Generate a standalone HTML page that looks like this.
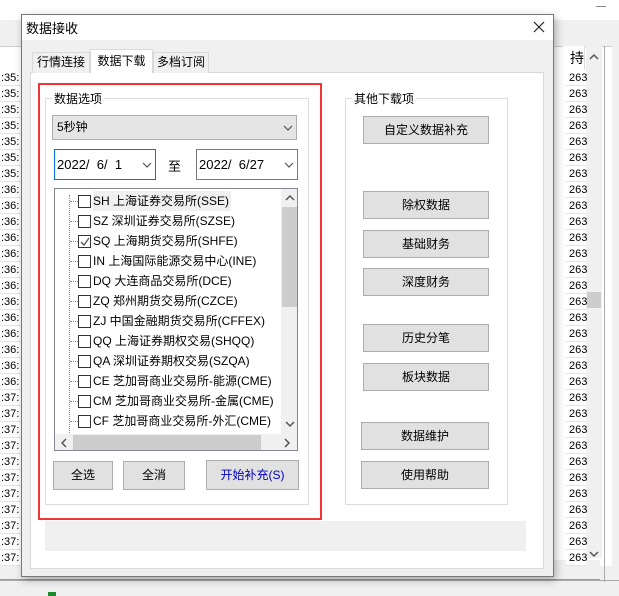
<!DOCTYPE html><html><head><meta charset="utf-8"><style>
*{margin:0;padding:0;box-sizing:border-box}
body{width:619px;height:596px;position:relative;overflow:hidden;background:#f0f0f0;font-family:"Liberation Sans","Noto Sans CJK SC",sans-serif;font-size:12px;color:#000}
.a{position:absolute}
.btn{position:absolute;background:#e1e1e1;border:1px solid #adadad;text-align:center;font-size:12px}
.row{position:absolute;height:16px;line-height:16px;font-size:11px;border-bottom:1px solid #e4e4e4;background:#fff}
.it{position:absolute;left:0;height:20px;line-height:20px;font-size:12px;white-space:nowrap}
.cb{position:absolute;width:13px;height:13px;border:1px solid #333;background:#fff;top:4px}
.dot{position:absolute;border-top:1px dotted #888;width:12px;top:10px}
</style></head><body>
<div class="a" style="left:0;top:0;width:619px;height:20px;background:#fff"></div>
<div class="a" style="top:6px;width:10px;border-top:1px solid #888;left:596px"></div>
<div class="a" style="left:0;top:46px;width:612px;height:520px;background:#fff;border-top:1px solid #ccc"></div>
<div class="a" style="left:563px;top:46px;width:22px;height:24px;background:#fff;border-right:1px solid #ddd;font-size:14px;line-height:24px;padding-left:7px">持1</div>
<div class="a" style="left:586px;top:46px;width:16px;height:512px;background:#f0f0f0"></div>
<div class="a" style="left:587px;top:292px;width:14px;height:16px;background:#cdcdcd"></div>
<svg class="a" style="left:589px;top:53px" width="10" height="8"><path d="M1 6 L5 2 L9 6" fill="none" stroke="#555" stroke-width="1.5"/></svg>
<svg class="a" style="left:589px;top:550px" width="10" height="8"><path d="M1 2 L5 6 L9 2" fill="none" stroke="#555" stroke-width="1.5"/></svg>
<div class="a" style="left:0;top:560px;width:600px;height:20px;background:#f0f0f0;border-bottom:1px solid #999"></div>
<div class="a" style="left:0;top:580px;width:619px;height:16px;background:#f0f0f0;border-top:1px solid #aaa"></div>
<div class="a" style="left:48px;top:592px;width:8px;height:4px;background:#1a8a2a"></div>
<div class="a" style="left:604px;top:46px;width:1px;height:536px;background:#aaa"></div>
<script>
var s='';for(var i=0;i<31;i++){var y=70+i*16;var t=i<7?':35:':(i<20?':36:':':37:');s+='<div class="row" style="left:0;top:'+y+'px;width:22px;padding-left:1px">'+t+'</div>';s+='<div class="row" style="left:566px;top:'+y+'px;width:20px;padding-left:3px">263</div>';}
document.write(s);
</script>
<!-- dialog -->
<div class="a" style="left:21px;top:14px;width:533px;height:563px;background:#f0f0f0;border:1px solid #777;box-shadow:2px 3px 8px rgba(0,0,0,.3)"></div>
<div class="a" style="left:22px;top:15px;width:531px;height:25px;background:#fff"></div>
<div class="a" style="left:26px;top:18px;font-size:13px">数据接收</div>
<svg class="a" style="left:533px;top:21px" width="12" height="12"><path d="M1 1 L11 11 M11 1 L1 11" stroke="#222" stroke-width="1.2"/></svg>
<div class="a" style="left:30px;top:72px;width:514px;height:497px;background:#fff;border:1px solid #d9d9d9"></div>
<div class="a" style="left:32px;top:52px;width:58px;height:21px;background:#f0f0f0;border:1px solid #d9d9d9;border-bottom:none;font-size:12px;line-height:19px;text-align:center">行情连接</div>
<div class="a" style="left:90px;top:49px;width:63px;height:24px;background:#fff;border:1px solid #d9d9d9;border-bottom:none;font-size:12px;line-height:22px;text-align:center">数据下载</div>
<div class="a" style="left:153px;top:52px;width:56px;height:21px;background:#f0f0f0;border:1px solid #d9d9d9;border-bottom:none;font-size:12px;line-height:19px;text-align:center">多档订阅</div>
<!-- red box -->
<div class="a" style="left:38px;top:83px;width:284px;height:437px;border:2px solid #f03535"></div>
<div class="a" style="left:45px;top:98px;width:264px;height:407px;border:1px solid #dcdcdc"></div>
<div class="a" style="left:52px;top:90px;background:#fff;padding:0 2px;font-size:12px">数据选项</div>
<div class="a" style="left:52px;top:115px;width:245px;height:25px;background:#e5e5e5;border:1px solid #adadad;line-height:23px;padding-left:4px">5秒钟</div>
<svg class="a" style="left:283px;top:125px" width="10" height="6"><path d="M1 1 L5 5 L9 1" fill="none" stroke="#555" stroke-width="1.2"/></svg>
<div class="a" style="left:54px;top:149px;width:102px;height:31px;border:1px solid #0078d7;background:#fff;line-height:29px;padding-left:2px;font-size:13px">2022/&nbsp; 6/&nbsp; 1</div>
<svg class="a" style="left:142px;top:162px" width="10" height="6"><path d="M1 1 L5 5 L9 1" fill="none" stroke="#555" stroke-width="1.2"/></svg>
<div class="a" style="left:168px;top:156px;font-size:13px">至</div>
<div class="a" style="left:196px;top:149px;width:102px;height:31px;border:1px solid #7a7a7a;background:#fff;line-height:29px;padding-left:2px;font-size:13px">2022/&nbsp; 6/27</div>
<svg class="a" style="left:284px;top:162px" width="10" height="6"><path d="M1 1 L5 5 L9 1" fill="none" stroke="#555" stroke-width="1.2"/></svg>
<!-- list -->
<div class="a" style="left:54px;top:188px;width:244px;height:263px;border:1px solid #828790;background:#fff;overflow:hidden">
<div class="a" style="left:14px;top:6px;height:248px;border-left:1px dotted #888"></div>
<div class="a" style="left:0;top:2px;width:226px;height:240px">
<script>
var it=['SH 上海证券交易所(SSE)','SZ 深圳证券交易所(SZSE)','SQ 上海期货交易所(SHFE)','IN 上海国际能源交易中心(INE)','DQ 大连商品交易所(DCE)','ZQ 郑州期货交易所(CZCE)','ZJ 中国金融期货交易所(CFFEX)','QQ 上海证券期权交易(SHQQ)','QA 深圳证券期权交易(SZQA)','CE 芝加哥商业交易所-能源(CME)','CM 芝加哥商业交易所-金属(CME)','CF 芝加哥商业交易所-外汇(CME)'];
var s='';for(var i=0;i<it.length;i++){s+='<div class="it" style="top:'+(i*20)+'px;width:230px"><div class="dot" style="left:15px"></div><div class="cb" style="left:23px">'+(i==2?'<svg style="position:absolute;left:1px;top:1px" width="10" height="10"><path d="M1 5 L4 8 L9 1" fill="none" stroke="#555" stroke-width="1.3"/></svg>':'')+'</div><span style="position:absolute;left:38px;'+(i==0?'background:#f0f0f0;padding-right:2px;':'')+'">'+it[i]+'</span></div>';}
document.write(s);
</script>
</div>
<div class="a" style="left:226px;top:0;width:17px;height:246px;background:#f0f0f0"></div>
<div class="a" style="top:18px;width:15px;height:100px;background:#cdcdcd;left:227px"></div>
<svg class="a" style="left:230px;top:6px" width="10" height="7"><path d="M1 5 L5 1 L9 5" fill="none" stroke="#555" stroke-width="1.5"/></svg>
<svg class="a" style="left:230px;top:232px" width="10" height="7"><path d="M1 1 L5 5 L9 1" fill="none" stroke="#555" stroke-width="1.5"/></svg>
<div class="a" style="left:0;top:245px;width:243px;height:17px;background:#f0f0f0"></div>
<div class="a" style="left:18px;top:246px;width:188px;height:15px;background:#cdcdcd"></div>
<svg class="a" style="left:6px;top:249px" width="7" height="10"><path d="M5 1 L1 5 L5 9" fill="none" stroke="#555" stroke-width="1.5"/></svg>
<svg class="a" style="left:229px;top:249px" width="7" height="10"><path d="M1 1 L5 5 L1 9" fill="none" stroke="#555" stroke-width="1.5"/></svg>
</div>
<div class="btn" style="left:53px;top:461px;width:60px;height:29px;line-height:27px">全选</div>
<div class="btn" style="left:123px;top:461px;width:62px;height:29px;line-height:27px">全消</div>
<div class="btn" style="left:206px;top:460px;width:93px;height:30px;line-height:28px;color:#0000c0">开始补充(S)</div>
<!-- right group -->
<div class="a" style="left:345px;top:98px;width:163px;height:407px;border:1px solid #dcdcdc"></div>
<div class="a" style="left:352px;top:90px;background:#fff;padding:0 2px">其他下载项</div>
<div class="btn" style="left:363px;top:116px;width:126px;height:28px;line-height:26px">自定义数据补充</div>
<div class="btn" style="left:363px;top:191px;width:126px;height:28px;line-height:26px">除权数据</div>
<div class="btn" style="left:363px;top:230px;width:126px;height:28px;line-height:26px">基础财务</div>
<div class="btn" style="left:363px;top:268px;width:126px;height:28px;line-height:26px">深度财务</div>
<div class="btn" style="left:363px;top:324px;width:126px;height:28px;line-height:26px">历史分笔</div>
<div class="btn" style="left:363px;top:363px;width:126px;height:28px;line-height:26px">板块数据</div>
<div class="btn" style="left:361px;top:422px;width:128px;height:28px;line-height:26px">数据维护</div>
<div class="btn" style="left:361px;top:461px;width:128px;height:28px;line-height:26px">使用帮助</div>
<div class="a" style="left:45px;top:521px;width:481px;height:30px;background:#f0f0f0"></div>
</body></html>
